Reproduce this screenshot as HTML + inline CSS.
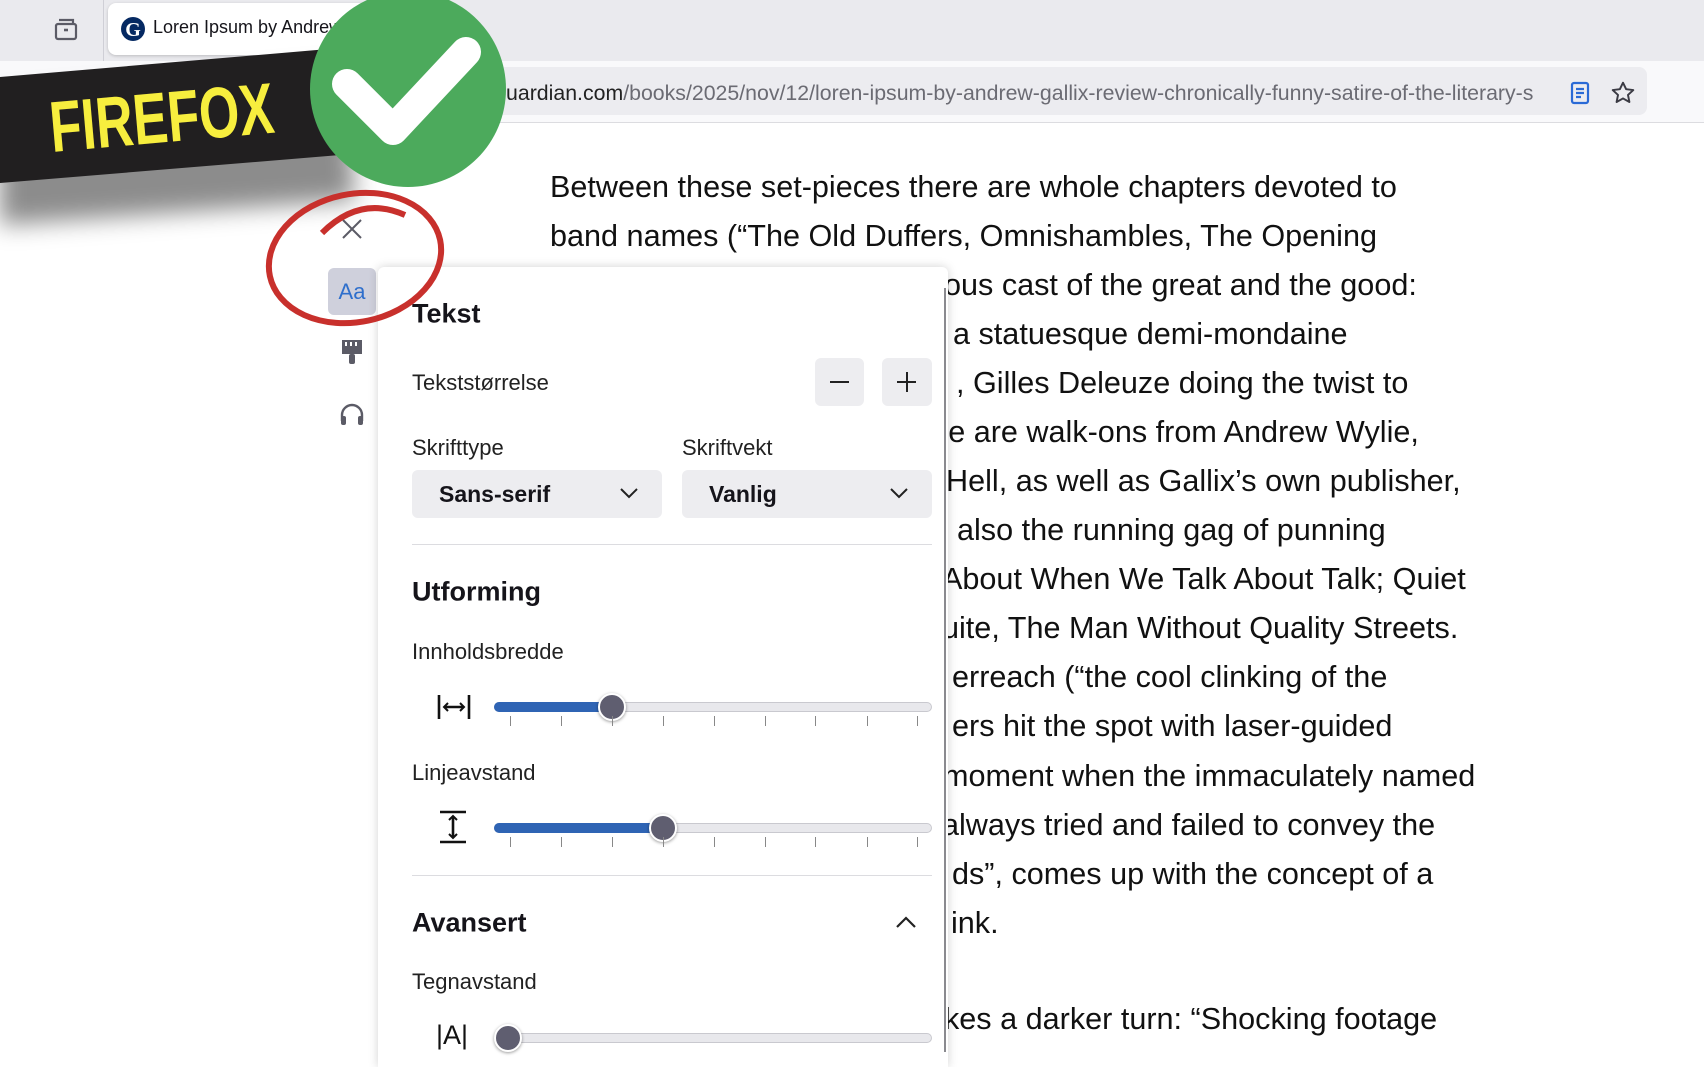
<!DOCTYPE html>
<html><head><meta charset="utf-8"><style>
*{margin:0;padding:0;box-sizing:border-box}
body{width:1704px;height:1052px;overflow:hidden;position:relative;background:#fff;font-family:"Liberation Sans",sans-serif;color:#15141a}
.abs{position:absolute}
.tabs{left:0;top:0;width:1704px;height:61px;background:#eaeaee}
.tool{left:0;top:61px;width:1704px;height:62px;background:#f9f9fb;border-bottom:1px solid #dcdce0}
.url{left:480px;top:67px;width:1167px;height:48px;background:#ececf0;border-radius:8px}
.ln{position:absolute;font-size:30.6px;line-height:49px;height:49px;white-space:nowrap;color:#111}
.panel{left:378px;top:267px;width:570px;height:800px;background:#fff;box-shadow:0 0 10px rgba(0,0,0,.18);border-radius:6px 6px 0 0}
.lbl{position:absolute;font-size:22px;color:#222;white-space:nowrap;transform:translateY(-50%)}
.h{position:absolute;font-size:27px;font-weight:bold;color:#15141a;transform:translateY(-50%)}
.btn{position:absolute;background:#ededf0;border-radius:6px}
.sel{position:absolute;height:48px;background:#ededf0;border-radius:6px;font-size:23px;font-weight:bold;line-height:48px}
.track{position:absolute;left:494px;width:438px;height:10px;border-radius:5px;background:#e8e8ec;border:1px solid #c9c9cf}
.fill{position:absolute;left:494px;height:10px;border-radius:5px;background:#2f64b4}
.thumb{position:absolute;width:28px;height:28px;border-radius:50%;background:#5f5e70;border:2px solid #fff;box-shadow:0 1px 3px rgba(0,0,0,.4)}
.tick{position:absolute;width:1px;height:10px;background:#888}
.hr{position:absolute;left:412px;width:520px;height:1px;background:#dcdce0}
</style></head><body>
<div class="abs tabs"></div>
<svg class="abs" style="left:52px;top:15px" width="28" height="28" viewBox="0 0 28 28" fill="none" stroke="#5b5b66" stroke-width="2.2"><path d="M7 5h14v4"/><rect x="4" y="9" width="20" height="15" rx="2"/><path d="M12 15h4" stroke-width="2.6"/></svg>
<div class="abs" style="left:103px;top:0;width:1px;height:61px;background:#cfcfd6"></div>
<div class="abs" style="left:108px;top:3px;width:340px;height:52px;background:#fff;border-radius:8px;box-shadow:0 1px 3px rgba(0,0,0,.2)"></div>
<svg class="abs" style="left:120px;top:16px" width="26" height="26" viewBox="0 0 26 26"><circle cx="13" cy="13" r="12" fill="#052962"/><text x="13" y="20" font-family="Liberation Serif" font-weight="bold" font-size="20" fill="#fff" text-anchor="middle">G</text></svg>
<div class="abs" style="left:153px;top:17px;font-size:18px;color:#15141a">Loren Ipsum by Andrew</div>
<div class="abs tool"></div>
<div class="abs url"></div>
<div class="abs" style="left:506px;top:81px;font-size:21.3px;color:#222;white-space:nowrap;width:1050px;overflow:hidden">uardian.com<span style="color:#6b6b73">/books/2025/nov/12/loren-ipsum-by-andrew-gallix-review-chronically-funny-satire-of-the-literary-s</span></div>
<svg class="abs" style="left:1569px;top:81px" width="22" height="24" viewBox="0 0 22 24" fill="none" stroke="#2a6ad6" stroke-width="2.2"><rect x="3" y="2" width="16" height="20" rx="2"/><path d="M7 8h8M7 12h8M7 16h5"/></svg>
<svg class="abs" style="left:1610px;top:80px" width="26" height="26" viewBox="0 0 24 24" fill="none" stroke="#3b3b44" stroke-width="1.8" stroke-linejoin="round"><path d="M12 2.5l2.9 6 6.6.8-4.9 4.5 1.3 6.5L12 17l-5.9 3.3 1.3-6.5-4.9-4.5 6.6-.8z"/></svg>

<div class="ln" style="left:550px;top:163px">Between these set-pieces there are whole chapters devoted to</div>
<div class="ln" style="left:550px;top:212px">band names (“The Old Duffers, Omnishambles, The Opening</div>
<div class="ln" style="left:944px;top:261px">ous cast of the great and the good:</div>
<div class="ln" style="left:953px;top:310px">a statuesque demi-mondaine</div>
<div class="ln" style="left:956px;top:359px">, Gilles Deleuze doing the twist to</div>
<div class="ln" style="left:938px;top:408px">re are walk-ons from Andrew Wylie,</div>
<div class="ln" style="left:946px;top:457px">Hell, as well as Gallix’s own publisher,</div>
<div class="ln" style="left:957px;top:506px">also the running gag of punning</div>
<div class="ln" style="left:942px;top:555px">About When We Talk About Talk; Quiet</div>
<div class="ln" style="left:942px;top:604px">uite, The Man Without Quality Streets.</div>
<div class="ln" style="left:952px;top:653px">erreach (“the cool clinking of the</div>
<div class="ln" style="left:952px;top:702px">ers hit the spot with laser-guided</div>
<div class="ln" style="left:943px;top:752px">moment when the immaculately named</div>
<div class="ln" style="left:942px;top:801px">always tried and failed to convey the</div>
<div class="ln" style="left:952px;top:850px">ds”, comes up with the concept of a</div>
<div class="ln" style="left:951px;top:899px">ink.</div>
<div class="ln" style="left:944px;top:995px">kes a darker turn: “Shocking footage</div>

<svg class="abs" style="left:340px;top:217px" width="24" height="24" viewBox="0 0 24 24" stroke="#5b5b66" stroke-width="2"><path d="M3 3l18 18M21 3L3 21"/></svg>
<div class="abs" style="left:328px;top:268px;width:48px;height:47px;background:#cfd0dc;border-radius:6px;color:#2f6fcc;font-size:22px;text-align:center;line-height:47px">Aa</div>
<svg class="abs" style="left:340px;top:339px" width="24" height="26" viewBox="0 0 24 26" fill="#5b5b66"><path d="M2 1h20v14H2z"/><rect x="9" y="15" width="6" height="10" rx="2"/><path d="M5 3h2v4H5zM10 3h2v4h-2zM15 3h2v4h-2z" fill="#fff"/></svg>
<svg class="abs" style="left:339px;top:402px" width="26" height="24" viewBox="0 0 26 24" fill="none" stroke="#5b5b66" stroke-width="2.4"><path d="M3 19v-6a10 10 0 0 1 20 0v6"/><rect x="2" y="14" width="5" height="9" rx="2" fill="#5b5b66" stroke="none"/><rect x="19" y="14" width="5" height="9" rx="2" fill="#5b5b66" stroke="none"/></svg>

<div class="abs panel"></div>
<div class="abs" style="left:944px;top:288px;width:2px;height:764px;background:#8a8a8f"></div>
<div class="h" style="left:412px;top:314px">Tekst</div>
<div class="lbl" style="left:412px;top:383px">Tekststørrelse</div>
<div class="btn" style="left:815px;top:358px;width:49px;height:48px"></div>
<div class="btn" style="left:882px;top:358px;width:50px;height:48px"></div>
<div class="abs" style="left:830px;top:381px;width:19px;height:2px;background:#222"></div>
<div class="abs" style="left:897px;top:381px;width:19px;height:2px;background:#222"></div>
<div class="abs" style="left:906px;top:372px;width:2px;height:20px;background:#222"></div>
<div class="lbl" style="left:412px;top:448px">Skrifttype</div>
<div class="lbl" style="left:682px;top:448px">Skriftvekt</div>
<div class="sel" style="left:412px;top:470px;width:250px;padding-left:27px">Sans-serif</div>
<div class="sel" style="left:682px;top:470px;width:250px;padding-left:27px">Vanlig</div>
<svg class="abs" style="left:619px;top:486px" width="20" height="14" viewBox="0 0 20 14" fill="none" stroke="#222" stroke-width="2"><path d="M2 3l8 8 8-8"/></svg>
<svg class="abs" style="left:889px;top:486px" width="20" height="14" viewBox="0 0 20 14" fill="none" stroke="#222" stroke-width="2"><path d="M2 3l8 8 8-8"/></svg>
<div class="hr" style="top:544px"></div>
<div class="h" style="left:412px;top:592px">Utforming</div>
<div class="lbl" style="left:412px;top:652px">Innholdsbredde</div>
<svg class="abs" style="left:436px;top:693px" width="36" height="28" viewBox="0 0 36 28" fill="none" stroke="#111" stroke-width="2.6"><path d="M3 2v24M33 2v24M8 14h20"/><path d="M12 10l-4 4 4 4M24 10l4 4-4 4" stroke-width="2"/></svg>
<div class="track" style="top:702px"></div><div class="fill" style="top:702px;width:118px"></div>
<div class="thumb" style="left:598px;top:693px"></div>
<div class="lbl" style="left:412px;top:773px">Linjeavstand</div>
<svg class="abs" style="left:438px;top:810px" width="30" height="34" viewBox="0 0 30 34" fill="none" stroke="#111" stroke-width="2.6"><path d="M2 2h26M2 32h26M15 7v20"/><path d="M11 10l4-4 4 4M11 24l4 4 4-4" stroke-width="2"/></svg>
<div class="track" style="top:823px"></div><div class="fill" style="top:823px;width:169px"></div>
<div class="thumb" style="left:649px;top:814px"></div>
<div class="hr" style="top:875px"></div>
<div class="h" style="left:412px;top:923px">Avansert</div>
<svg class="abs" style="left:895px;top:915px" width="22" height="14" viewBox="0 0 22 14" fill="none" stroke="#222" stroke-width="2.2"><path d="M2 12l9-9 9 9"/></svg>
<div class="lbl" style="left:412px;top:982px">Tegnavstand</div>
<div class="abs" style="left:436px;top:1020px;font-size:27px;color:#111">|A|</div>
<div class="track" style="top:1033px"></div>
<div class="thumb" style="left:494px;top:1024px"></div>
<div class="tick" style="left:510px;top:716px"></div><div class="tick" style="left:561px;top:716px"></div><div class="tick" style="left:612px;top:716px"></div><div class="tick" style="left:663px;top:716px"></div><div class="tick" style="left:714px;top:716px"></div><div class="tick" style="left:765px;top:716px"></div><div class="tick" style="left:815px;top:716px"></div><div class="tick" style="left:867px;top:716px"></div><div class="tick" style="left:917px;top:716px"></div>
<div class="tick" style="left:510px;top:837px"></div><div class="tick" style="left:561px;top:837px"></div><div class="tick" style="left:612px;top:837px"></div><div class="tick" style="left:663px;top:837px"></div><div class="tick" style="left:714px;top:837px"></div><div class="tick" style="left:765px;top:837px"></div><div class="tick" style="left:815px;top:837px"></div><div class="tick" style="left:867px;top:837px"></div><div class="tick" style="left:917px;top:837px"></div>

<svg class="abs" style="left:0;top:0" width="560" height="340" viewBox="0 0 560 340">
<defs><filter id="sh" x="-20%" y="-20%" width="140%" height="180%"><feGaussianBlur stdDeviation="12"/></filter></defs>
<polygon points="0,100 345,70 355,200 0,225" fill="rgba(0,0,0,.45)" filter="url(#sh)"/>
<polygon points="0,77 340,48 352,154 0,183" fill="#211f20"/>
<text x="0" y="0" font-family="Liberation Sans" font-weight="bold" font-size="72" fill="#f7ee3e" transform="translate(52,152) rotate(-5) scale(0.72,1)">FIREFOX</text>
<circle cx="408" cy="89" r="98" fill="#4caa5c"/>
<path d="M347 84 L393 130 L466 52" fill="none" stroke="#fff" stroke-width="30" stroke-linecap="round" stroke-linejoin="round"/>
<ellipse cx="355" cy="258" rx="87" ry="64" transform="rotate(-12 355 258)" fill="none" stroke="#c8302c" stroke-width="6"/>
<path d="M322 233 Q 360 195 405 215" fill="none" stroke="#c8302c" stroke-width="6"/>
</svg>
</body></html>
